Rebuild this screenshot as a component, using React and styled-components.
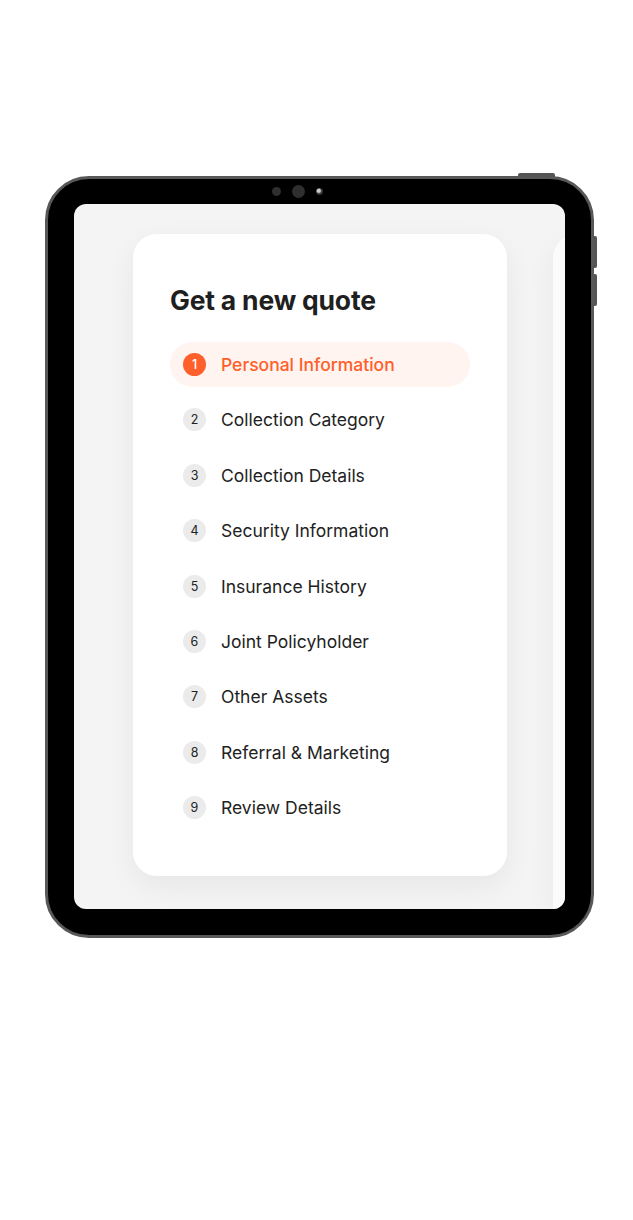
import React from 'react';
import styled, { createGlobalStyle } from 'styled-components';

const GlobalStyle = createGlobalStyle`
  html, body {
    margin: 0;
    padding: 0;
    background: #ffffff;
    font-family: "Inter", "Liberation Sans", sans-serif;
  }
`;

const Page = styled.div`
  width: 633px;
  height: 1220px;
  padding: 176px 0 0 45px;
  box-sizing: border-box;
`;

const Tablet = styled.div`
  position: relative;
  width: 549px;
  height: 762px;
  box-sizing: border-box;
  border: 3px solid #585858;
  border-radius: 44px;
  background: #000;
  padding: 25px 26px 26px 26px;
`;

const Camera = styled.div`
  position: absolute;
  top: 6px;
  left: 0;
  right: 0;
  height: 13px;
  padding-right: 44px;
  display: flex;
  justify-content: center;
  align-items: center;
  gap: 11px;
`;

const Lens = styled.span`
  width: ${p => p.size}px;
  height: ${p => p.size}px;
  border-radius: 50%;
  background: ${p => p.shine ? 'radial-gradient(circle at 40% 40%, #ccc 0 25%, #333 50%)' : '#2f2f2f'};
`;

const TopButton = styled.div`
  position: absolute;
  top: -6px;
  right: 36px;
  width: 37px;
  height: 4px;
  border-radius: 2px 2px 0 0;
  background: #555;
`;

const SideButton = styled.div`
  position: absolute;
  right: -6px;
  top: ${p => p.top}px;
  width: 3px;
  height: 32px;
  border-radius: 0 2px 2px 0;
  background: #555;
`;

const Screen = styled.div`
  width: 100%;
  height: 100%;
  border-radius: 12px;
  background: #f4f4f4;
  overflow: hidden;
  display: flex;
  gap: 46px;
  padding: 30px 0 0 59px;
  box-sizing: border-box;
`;

const Card = styled.div`
  flex: 0 0 374px;
  height: 642px;
  box-sizing: border-box;
  background: #fff;
  border-radius: 24px;
  box-shadow: 0 10px 30px rgba(0, 0, 0, 0.06);
  padding: 50px 37px 44px;
`;

const NextCard = styled.div`
  flex: 0 0 374px;
  align-self: stretch;
  background: #fbfbfb;
  border-radius: 24px 24px 0 0;
  box-shadow: 0 10px 30px rgba(0, 0, 0, 0.05);
`;

const Title = styled.h1`
  margin: 0 0 26px;
  font-size: 26.5px;
  line-height: 32px;
  font-weight: 700;
  color: #1f1f1f;
  letter-spacing: -0.2px;
`;

const Steps = styled.ol`
  list-style: none;
  margin: 0;
  padding: 0;
  display: flex;
  flex-direction: column;
  gap: 10.4px;
`;

const Step = styled.li`
  height: 45px;
  display: flex;
  align-items: center;
  gap: 15px;
  padding-left: 13px;
  border-radius: 23px;
  background: ${p => p.active ? '#fff4f0' : 'transparent'};
  color: ${p => p.active ? '#ff5f2a' : '#222'};
  font-size: 17.5px;
  font-weight: ${p => p.active ? 500 : 400};
`;

const Num = styled.span`
  width: 23px;
  height: 23px;
  border-radius: 50%;
  display: flex;
  align-items: center;
  justify-content: center;
  font-size: 12.5px;
  background: ${p => p.active ? '#ff5f2a' : '#ebebeb'};
  color: ${p => p.active ? '#fff' : '#222'};
`;

const steps = [
  'Personal Information',
  'Collection Category',
  'Collection Details',
  'Security Information',
  'Insurance History',
  'Joint Policyholder',
  'Other Assets',
  'Referral & Marketing',
  'Review Details',
];

export default function App() {
  return (
    <Page>
      <GlobalStyle />
      <Tablet>
        <TopButton />
        <SideButton top={57} />
        <SideButton top={95} />
        <Camera>
          <Lens size={9} />
          <Lens size={13} />
          <Lens size={7} shine />
        </Camera>
        <Screen>
          <Card>
            <Title>Get a new quote</Title>
            <Steps>
              {steps.map((s, i) => (
                <Step key={s} active={i === 0}>
                  <Num active={i === 0}>{i + 1}</Num>
                  {s}
                </Step>
              ))}
            </Steps>
          </Card>
          <NextCard />
        </Screen>
      </Tablet>
    </Page>
  );
}
